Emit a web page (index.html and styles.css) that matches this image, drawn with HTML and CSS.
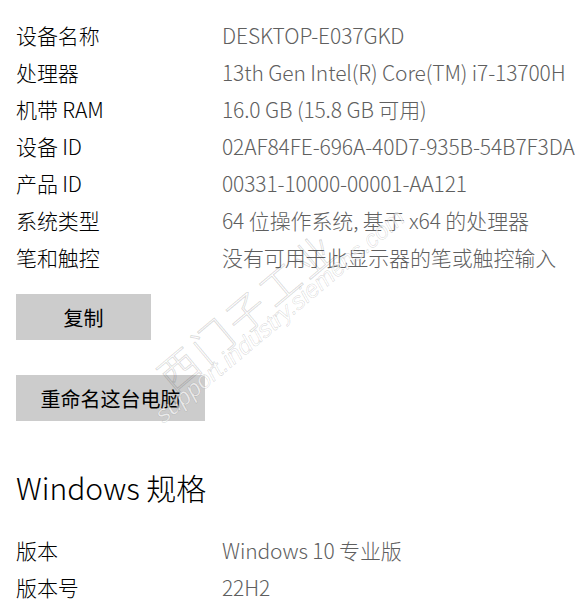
FILE: index.html
```html
<!DOCTYPE html>
<html lang="zh-CN">
<head>
<meta charset="utf-8">
<title>关于</title>
<link rel="stylesheet" href="styles.css">
</head>
<body>
<main class="page">
  <section class="specs">
    <div class="row"><span class="label">设备名称</span><span class="value">DESKTOP-E037GKD</span></div>
    <div class="row"><span class="label">处理器</span><span class="value">13th Gen Intel(R) Core(TM) i7-13700H</span></div>
    <div class="row"><span class="label">机带 RAM</span><span class="value">16.0 GB (15.8 GB 可用)</span></div>
    <div class="row"><span class="label">设备 ID</span><span class="value value-clip">02AF84FE-696A-40D7-935B-54B7F3DA</span></div>
    <div class="row"><span class="label">产品 ID</span><span class="value">00331-10000-00001-AA121</span></div>
    <div class="row"><span class="label">系统类型</span><span class="value">64 位操作系统, 基于 x64 的处理器</span></div>
    <div class="row"><span class="label">笔和触控</span><span class="value">没有可用于此显示器的笔或触控输入</span></div>
  </section>
  <div class="actions">
    <button class="btn btn-copy">复制</button>
    <button class="btn btn-rename">重命名这台电脑</button>
  </div>
  <h2 class="heading">Windows 规格</h2>
  <section class="specs">
    <div class="row"><span class="label">版本</span><span class="value">Windows 10 专业版</span></div>
    <div class="row"><span class="label">版本号</span><span class="value">22H2</span></div>
  </section>
  <div class="watermark" aria-hidden="true">
    <span class="wm-cn">西门子工业</span>
    <span class="wm-url">support.industry.siemens.com</span>
  </div>
</main>
</body>
</html>
```
FILE: styles.css
```css
html, body {
  margin: 0;
  padding: 0;
  background: #fff;
}
body {
  font-family: "Noto Sans CJK SC", "Noto Sans", sans-serif;
  font-weight: 300;
  color: #000;
  overflow: hidden;
}
.page {
  position: relative;
  padding: 16px 0 0 16px;
  height: 604px;
  box-sizing: border-box;
}
.specs {
  display: flex;
  flex-direction: column;
}
.row {
  display: flex;
  height: 37px;
  align-items: center;
  font-size: 21px;
  letter-spacing: -0.12px;
  white-space: nowrap;
}
.label {
  width: 206px;
  flex: none;
  color: #000;
}
.value {
  color: #5f5f5f;
}
.value-clip {
  overflow: hidden;
  max-width: 355px;
}
.actions {
  display: flex;
  flex-direction: column;
  align-items: flex-start;
  gap: 35px;
  margin-top: 19px;
}
.btn {
  border: none;
  background: #ccc;
  height: 46px;
  font-family: "Noto Sans CJK SC", sans-serif;
  font-weight: 400;
  font-size: 20px;
  color: #000;
  padding: 0 20px;
  margin: 0;
}
.btn-copy {
  width: 135px;
}
.btn-rename {
  width: 189px;
}
.heading {
  margin: 46px 0 24px;
  font-weight: 300;
  font-size: 30px;
  line-height: 40px;
  height: 40px;
}
.watermark {
  position: absolute;
  left: 0;
  top: 0;
  width: 577px;
  height: 604px;
  pointer-events: none;
}
.wm-cn {
  position: absolute;
  left: 145px;
  top: 360px;
  font-size: 40px;
  line-height: 54px;
  letter-spacing: 4px;
  color: transparent;
  -webkit-text-stroke: 1px rgba(0, 0, 0, 0.15);
  transform: rotate(-40deg);
  transform-origin: left top;
  white-space: nowrap;
}
.wm-url {
  position: absolute;
  left: 150px;
  top: 408px;
  font-family: "Liberation Sans", sans-serif;
  font-size: 24px;
  line-height: 26px;
  font-style: italic;
  color: rgba(255, 255, 255, 0.6);
  -webkit-text-stroke: 0.7px rgba(0, 0, 0, 0.14);
  transform: rotate(-40deg);
  transform-origin: left top;
  white-space: nowrap;
}
```
